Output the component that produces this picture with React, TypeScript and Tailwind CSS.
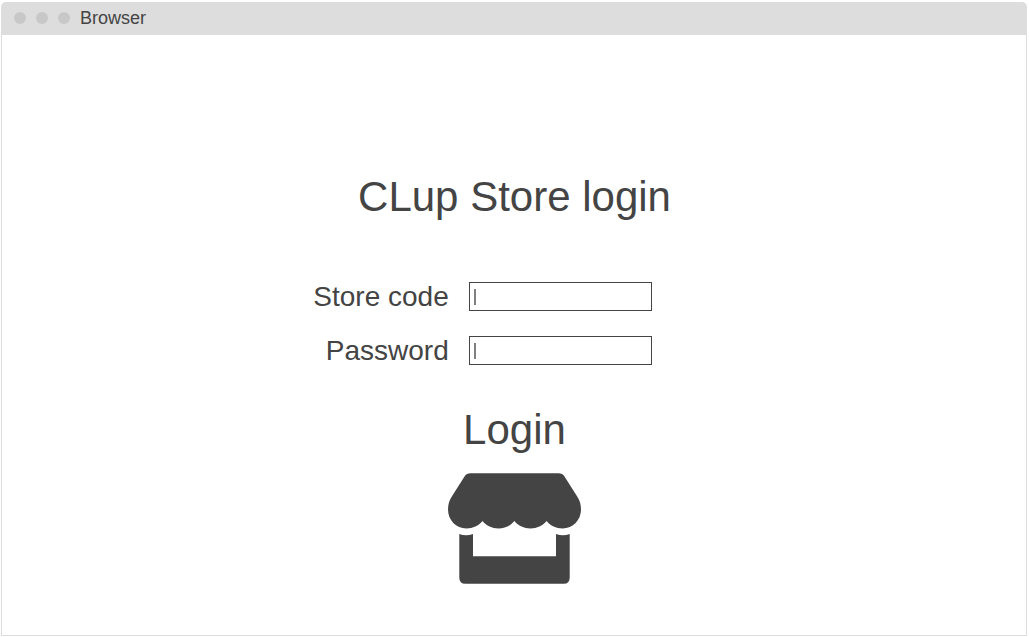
type FieldProps = {
  id: string;
  label: string;
  type: "text" | "password";
};

function Field({ id, label, type }: FieldProps) {
  return (
    <>
      <label htmlFor={id} className="text-right text-[28px] leading-7 whitespace-nowrap">
        {label}
      </label>
      <div className="relative flex">
        <input
          id={id}
          name={id}
          type={type}
          className="h-[29px] w-[183px] border border-[#444444] bg-white px-2 text-base caret-[#808080] outline-none"
        />
        <span aria-hidden="true" className="pointer-events-none absolute top-[7px] left-[5px] h-4 w-0.5 bg-[#808080]" />
      </div>
    </>
  );
}

function StoreIcon() {
  return (
    <svg aria-hidden="true" width="133" height="111" viewBox="0 0 133 111" fill="currentColor">
      <path d="M22.5 0.2H110.5Q114.5 0.2 116.5 3.5L129.5 24Q133 29.5 133 36.5C133 47 125 55.4 114.5 55.4C108 55.4 102.5 52.8 98.6 48C94.5 52.8 89 55.4 82.5 55.4C76 55.4 70.4 52.8 66.4 48C62.4 52.8 57 55.4 50.5 55.4C44 55.4 38.5 52.8 34.5 48C30.5 52.8 25 55.4 18.5 55.4C8 55.4 0 47 0 36.5Q0 29.5 3.5 24L16.5 3.5Q18.5 0.2 22.5 0.2Z" />
      <path d="M11.3 61Q18 63.4 25 61V83.3H108V61Q115 63.4 121.7 61V104.7Q121.7 110.7 115.7 110.7H17.3Q11.3 110.7 11.3 104.7Z" />
    </svg>
  );
}

export default function App() {
  return (
    <div className="mr-px flex min-h-screen flex-col bg-white px-px pt-0.5 pb-px font-['Liberation_Sans',Arial,sans-serif] text-[#444444]">
      <header className="flex h-[33px] items-center rounded-t-[5px] bg-[#dddddd] px-[13px] pb-0.5">
        <div className="flex gap-2.5" aria-hidden="true">
          <span className="size-3 rounded-full bg-[#c8c8c8]" />
          <span className="size-3 rounded-full bg-[#c8c8c8]" />
          <span className="size-3 rounded-full bg-[#c8c8c8]" />
        </div>
        <span className="ml-2.5 text-lg leading-6">Browser</span>
      </header>
      <main className="flex grow flex-col items-center border-x border-b border-[#dddddd] pt-[137px] pb-8 pl-px">
        <h1 className="text-[42px] leading-[50px]">CLup Store login</h1>
        <form className="mt-[60px] flex flex-col items-center" onSubmit={(e) => e.preventDefault()}>
          <div className="mr-16 grid grid-cols-[auto_auto] items-center gap-x-5 gap-y-[25px]">
            <Field id="store-code" label="Store code" type="text" />
            <Field id="password" label="Password" type="password" />
          </div>
          <button type="submit" className="mt-10 flex cursor-pointer flex-col items-center gap-[18px]">
            <span className="text-[42px] leading-[50px]">Login</span>
            <StoreIcon />
          </button>
        </form>
      </main>
    </div>
  );
}
